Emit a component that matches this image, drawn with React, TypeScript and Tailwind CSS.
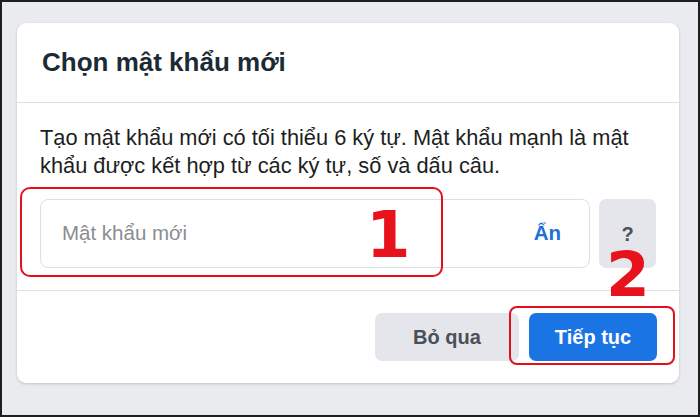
import React from 'react';

const App: React.FC = () => {
  return (
    <div className="relative w-[700px] h-[417px] border-2 border-[#1e1e1e] bg-[#e9ebee] pl-[15px] pt-[21px] pr-[19px] font-['Liberation_Sans',Arial,sans-serif] overflow-hidden">
      <div className="w-[662px] h-[360px] bg-white rounded-[9px] shadow-[0_1px_3px_rgba(0,0,0,0.18)] flex flex-col">
        <div className="h-[80px] border-b border-[#dddfe2] flex items-center pl-[25px]">
          <h1 className="text-[26px] font-bold text-[#1c2b33]">Chọn mật khẩu mới</h1>
        </div>

        <div className="px-[23px] pt-[21px] pb-[22px] border-b border-[#dddfe2]">
          <p className="text-[21.8px] leading-[28px] text-[#1c1e21]">
            Tạo mật khẩu mới có tối thiểu 6 ký tự. Mật khẩu mạnh là mật khẩu được kết hợp từ các ký tự, số và dấu câu.
          </p>
          <div className="mt-[19px] flex gap-[9px]">
            <div className="w-[551px] h-[69px] border border-[#dddfe2] rounded-[8px] flex items-center justify-between pl-[21px] pr-[28px]">
              <span className="text-[20.5px] text-[#8a8d91]">Mật khẩu mới</span>
              <span className="text-[20.5px] font-bold text-[#216fdb]">Ẩn</span>
            </div>
            <div className="w-[57px] h-[69px] bg-[#e4e6eb] rounded-[7px] flex items-center justify-center">
              <span className="text-[20px] font-bold text-[#4b4f56]">?</span>
            </div>
          </div>
        </div>

        <div className="flex-1 flex items-center justify-end gap-[10px] pr-[22px]">
          <button className="w-[144px] h-[48px] rounded-[7px] bg-[#e4e6eb] text-[20px] font-bold text-[#4b4f56]">
            Bỏ qua
          </button>
          <button className="w-[128px] h-[48px] rounded-[7px] bg-[#1b74e4] text-[20px] font-bold text-white">
            Tiếp tục
          </button>
        </div>
      </div>

      {/* annotations */}
      <div className="absolute left-[18px] top-[185px] w-[423px] h-[90px] border-[2px] border-[#e3101c] rounded-[10px]" />
      <div className="absolute left-[507px] top-[304px] w-[166px] h-[59px] border-[2px] border-[#e3101c] rounded-[8px]" />
      <span className="absolute left-[364px] top-[201px] text-[64px] leading-none font-bold text-[#e8121c] font-['DejaVu_Sans',sans-serif]">1</span>
      <span className="absolute left-[604px] top-[241px] text-[63px] leading-none font-bold text-[#e8121c] font-['DejaVu_Sans',sans-serif]">2</span>
    </div>
  );
};

export default App;
